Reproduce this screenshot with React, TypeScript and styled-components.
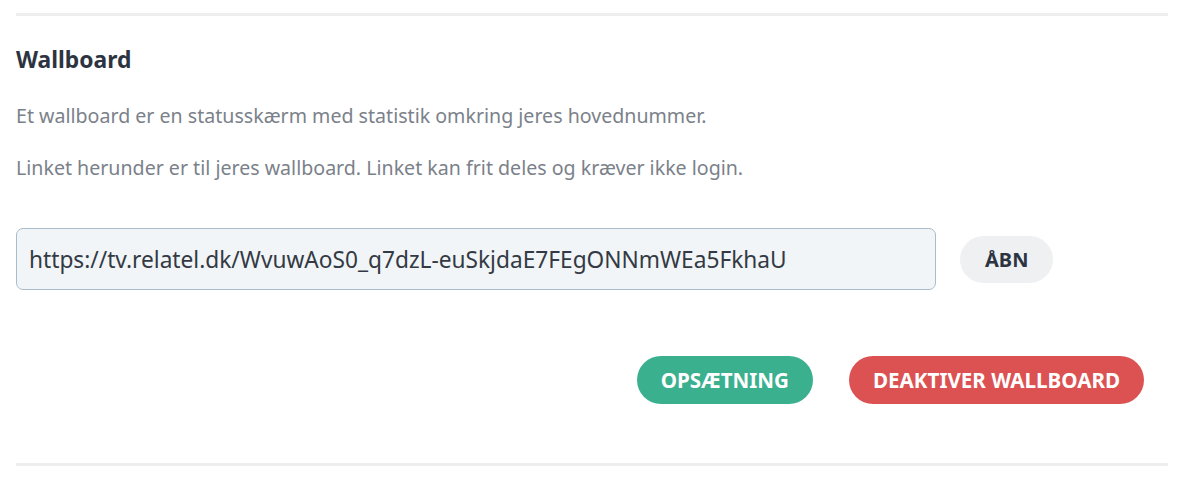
import React from 'react';
import styled, { createGlobalStyle } from 'styled-components';

const GlobalStyle = createGlobalStyle`
  body {
    margin: 0;
    background: #ffffff;
    font-family: 'Noto Sans', 'Open Sans', sans-serif;
  }
`;

const WALLBOARD_URL = 'https://tv.relatel.dk/WvuwAoS0_q7dzL-euSkjdaE7FEgONNmWEa5FkhaU';

const App = () => {
  return (
    <>
      <GlobalStyle />
      <Section>
        <Title>Wallboard</Title>
        <Text>Et wallboard er en statusskærm med statistik omkring jeres hovednummer.</Text>
        <Text>Linket herunder er til jeres wallboard. Linket kan frit deles og kræver ikke login.</Text>
        <LinkRow>
          <UrlInput readOnly value={WALLBOARD_URL} />
          <OpenButton>ÅBN</OpenButton>
        </LinkRow>
        <Actions>
          <PillButton $color="#3bb08f">OPSÆTNING</PillButton>
          <PillButton $color="#dc5151">DEAKTIVER WALLBOARD</PillButton>
        </Actions>
      </Section>
    </>
  );
};

const Section = styled.section`
  margin: 13px 13px 0 16px;
  border-top: 3px solid #eeeeee;
  border-bottom: 3px solid #eeeeee;
  padding: 30px 0 59px;
`;
const Title = styled.h2`
  margin: 0 0 28px;
  font-size: 22.8px;
  line-height: 28px;
  font-weight: 700;
  color: #2b3440;
`;
const Text = styled.p`
  margin: 0 0 24px;
  font-size: 19.6px;
  line-height: 28px;
  color: #7b818a;
`;
const LinkRow = styled.div`
  display: flex;
  align-items: center;
  gap: 24px;
  margin-top: 46px;
`;
const UrlInput = styled.input`
  width: 920px;
  height: 62px;
  box-sizing: border-box;
  padding: 0 12px;
  border: 1px solid #a9bccb;
  border-radius: 7px;
  background: #f1f5f7;
  font-family: inherit;
  font-size: 22.7px;
  color: #333a44;
  outline: none;
`;
const OpenButton = styled.button`
  height: 47px;
  padding: 0 25px;
  border: none;
  border-radius: 24px;
  background: #eff0f2;
  font-family: inherit;
  font-size: 20px;
  font-weight: 700;
  color: #2b3440;
`;
const Actions = styled.div`
  display: flex;
  justify-content: flex-end;
  gap: 36px;
  margin: 66px 24px 0 0;
`;
const PillButton = styled.button<{ $color: string }>`
  height: 48px;
  padding: 0 24px;
  border: none;
  border-radius: 24px;
  background: ${(p) => p.$color};
  font-family: inherit;
  font-size: 20.6px;
  font-weight: 700;
  color: #ffffff;
`;

export default App;
